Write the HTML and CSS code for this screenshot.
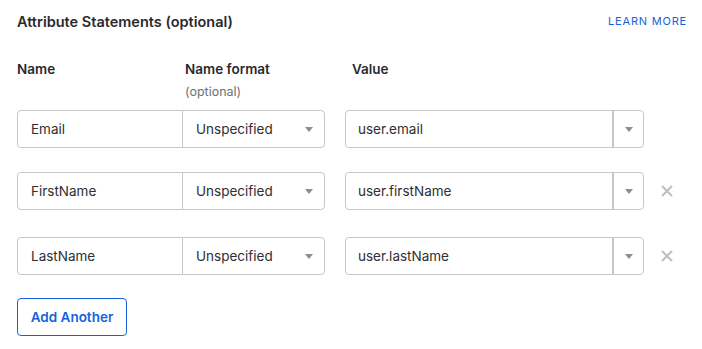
FILE: index.html
```html
<!DOCTYPE html>
<html>
<head>
  <meta charset="UTF-8">
  <title>Attribute Statements</title>
  <link rel="stylesheet" href="styles.css">
</head>
<body>

  <div class="panel">
    <div class="panel-head">
      <h2>Attribute Statements (optional)</h2>
      <a class="learn-more" href="#">LEARN MORE</a>
    </div>

    <div class="col-labels">
      <div><b>Name</b></div>
      <div><b>Name format</b><span class="hint">(optional)</span></div>
      <div><b>Value</b></div>
    </div>

    <div class="attr-row">
      <input class="name-input" type="text" value="Email" />
      <div class="format-select">Unspecified<span class="caret"></span></div>
      <div class="value-combo">
        <span class="value-text">user.email</span>
        <span class="value-toggle"><span class="caret"></span></span>
      </div>
    </div>

    <div class="attr-row">
      <input class="name-input" type="text" value="FirstName" />
      <div class="format-select">Unspecified<span class="caret"></span></div>
      <div class="value-combo">
        <span class="value-text">user.firstName</span>
        <span class="value-toggle"><span class="caret"></span></span>
      </div>
      <button type="button" class="remove-btn" aria-label="Remove">
        <svg width="12" height="12" viewBox="0 0 12 12"><path d="M1 1L11 11M11 1L1 11" stroke="#bdbdc2" stroke-width="2" fill="none"/></svg>
      </button>
    </div>

    <div class="attr-row last">
      <input class="name-input" type="text" value="LastName" />
      <div class="format-select">Unspecified<span class="caret"></span></div>
      <div class="value-combo">
        <span class="value-text">user.lastName</span>
        <span class="value-toggle"><span class="caret"></span></span>
      </div>
      <button type="button" class="remove-btn" aria-label="Remove">
        <svg width="12" height="12" viewBox="0 0 12 12"><path d="M1 1L11 11M11 1L1 11" stroke="#bdbdc2" stroke-width="2" fill="none"/></svg>
      </button>
    </div>

    <button type="button" class="add-btn">Add Another</button>
  </div>

</body>
</html>
```

FILE: styles.css
```css
body {
  margin: 0;
  background-color: #fff;
  font-family: Inter, "Noto Sans", Arial, sans-serif;
  color: #1d1d21;
}

.panel {
  padding: 10px 17px 0;
}

.panel-head {
  display: flex;
  justify-content: space-between;
  align-items: center;
  height: 22px;
}

.panel-head h2 {
  margin: 0;
  font-size: 14.5px;
  font-weight: 600;
  color: #2a2a2e;
}

.learn-more {
  margin-right: -2px;
  font-size: 11px;
  letter-spacing: 0.8px;
  color: #1662dd;
  text-decoration: none;
}

.col-labels {
  display: grid;
  grid-template-columns: 168px 167px auto;
  margin-top: 28px;
  height: 50px;
}

.col-labels b {
  display: block;
  font-size: 13.5px;
  font-weight: 600;
  line-height: 18px;
  color: #2a2a2e;
}

.hint {
  display: block;
  margin-top: 6px;
  font-size: 12.5px;
  color: #6e6e78;
}

.attr-row {
  display: flex;
  align-items: center;
  height: 38px;
  margin-bottom: 24px;
  font-size: 13.5px;
  color: #2e2e33;
}

.attr-row + .attr-row {
  margin-bottom: 27px;
}

.attr-row.last {
  margin-bottom: 23px;
}

.name-input {
  box-sizing: border-box;
  width: 166px;
  height: 38px;
  margin: 0;
  padding: 0 13px;
  border: 1px solid #c6c6cc;
  border-radius: 4px 0 0 4px;
  font-family: inherit;
  font-size: 13.5px;
  color: #2e2e33;
}

.format-select {
  box-sizing: border-box;
  position: relative;
  width: 143px;
  height: 38px;
  margin-left: -1px;
  padding: 0 13px;
  line-height: 36px;
  border: 1px solid #c6c6cc;
  border-radius: 0 4px 4px 0;
}

.caret {
  position: absolute;
  top: 16px;
  right: 11px;
  width: 0;
  height: 0;
  border-left: 4px solid transparent;
  border-right: 4px solid transparent;
  border-top: 5px solid #8c8c96;
}

.value-combo {
  box-sizing: border-box;
  display: flex;
  width: 299px;
  height: 38px;
  margin-left: 20px;
  border: 1px solid #c6c6cc;
  border-radius: 4px;
}

.value-text {
  flex: 1;
  padding: 0 12px;
  line-height: 36px;
  border-right: 2px solid #c6c6cc;
}

.value-toggle {
  position: relative;
  width: 29px;
}

.value-toggle .caret {
  right: 10px;
}

.remove-btn {
  display: flex;
  margin-left: 17px;
  padding: 0;
  border: none;
  background: none;
  cursor: pointer;
}

.add-btn {
  width: 110px;
  height: 38px;
  padding: 0;
  border: 1px solid #1662dd;
  border-radius: 4px;
  background-color: #fff;
  color: #1662dd;
  font-family: inherit;
  font-size: 13.5px;
  font-weight: 600;
  cursor: pointer;
}
```
